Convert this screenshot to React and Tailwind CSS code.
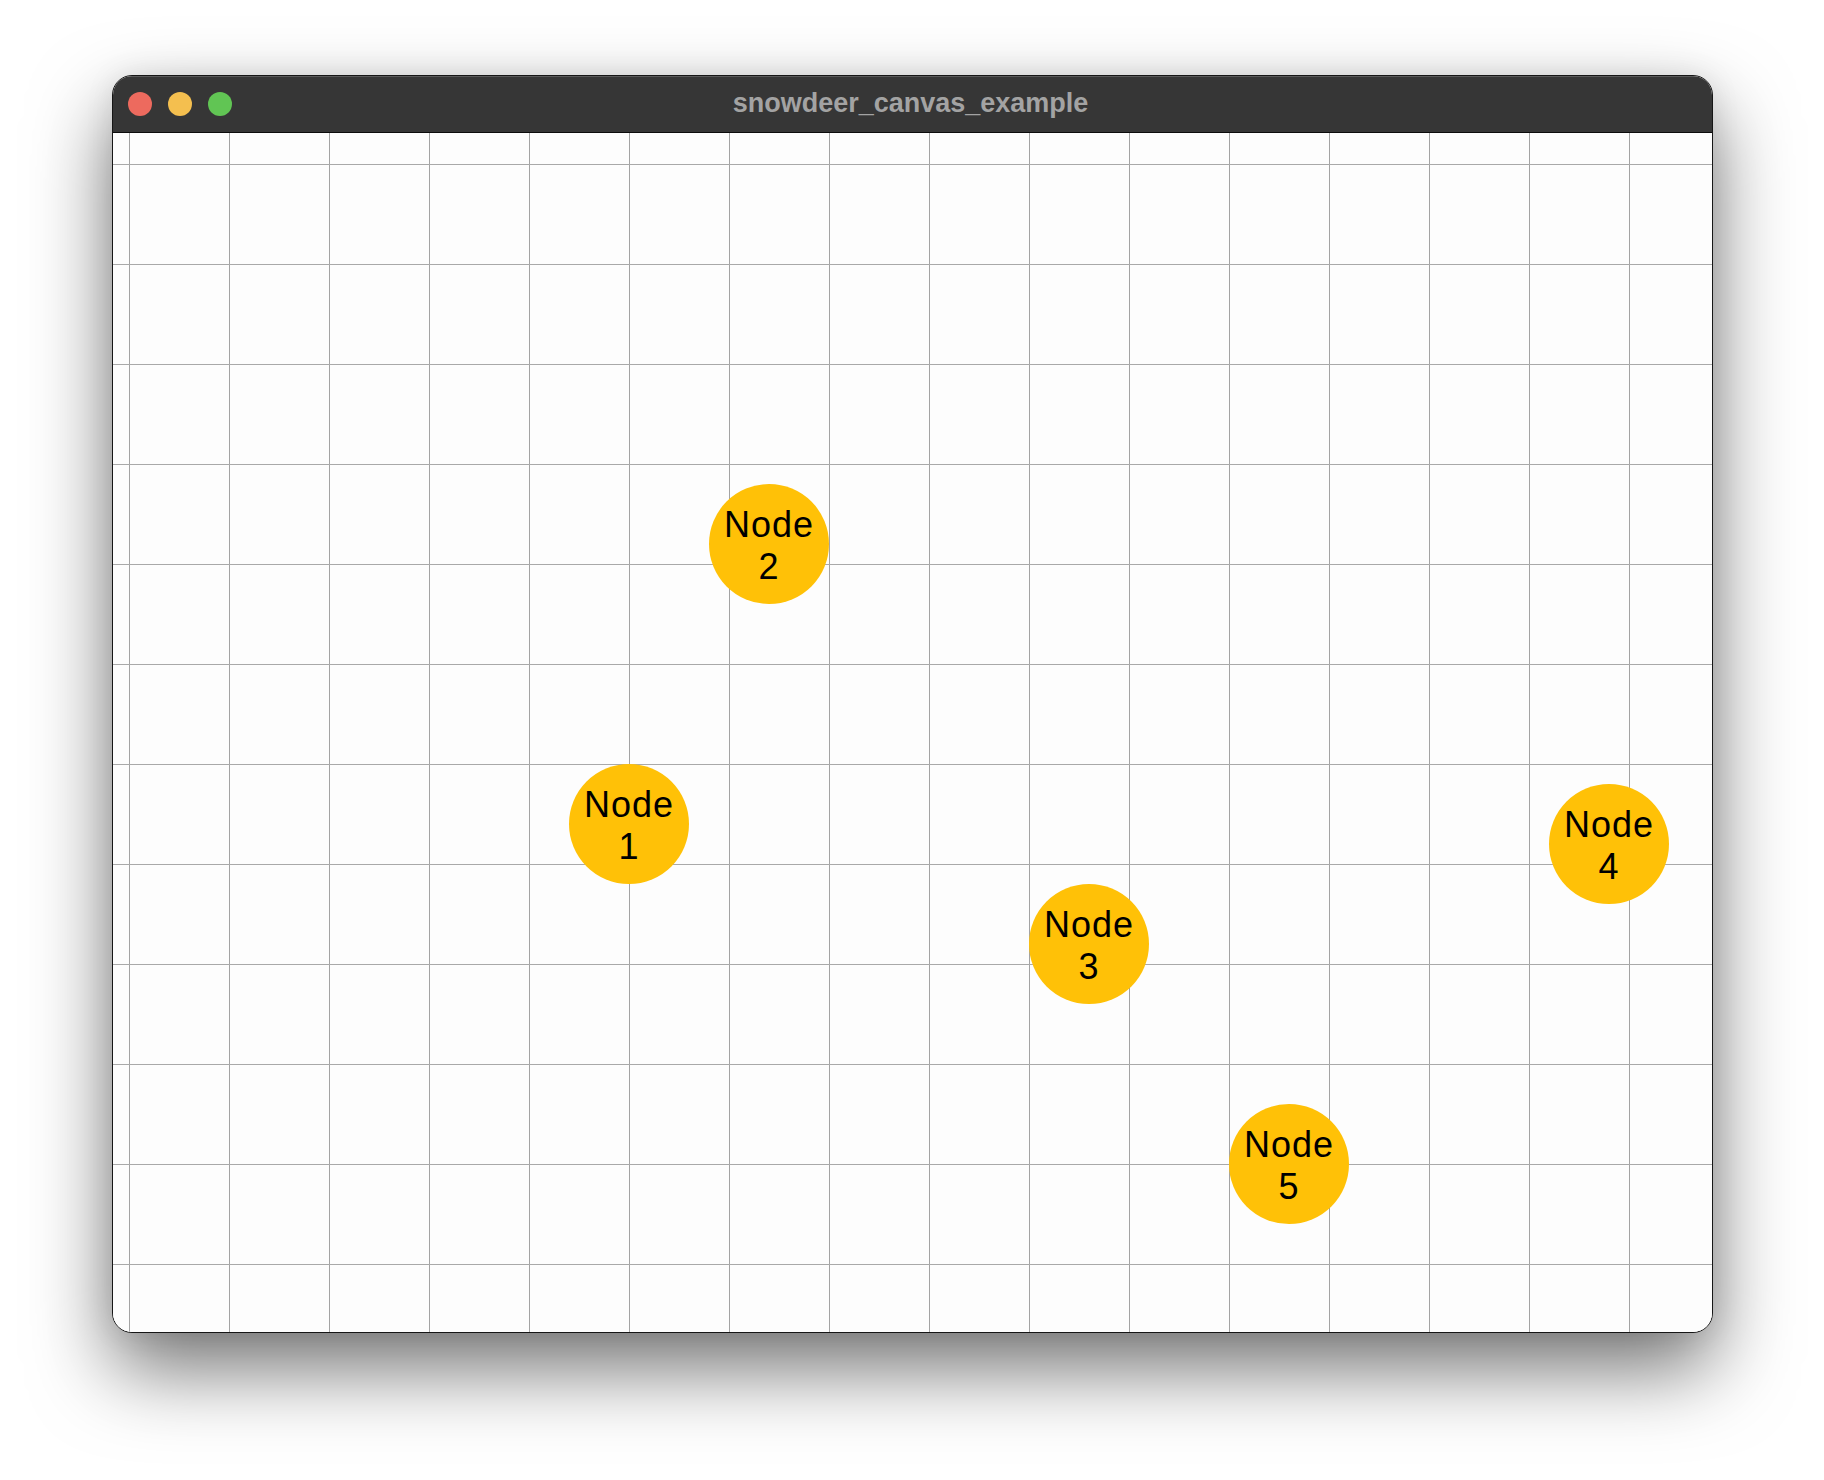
import React from "react";

const nodes = [
  { id: 1, x: 516, y: 691 },
  { id: 2, x: 656, y: 411 },
  { id: 3, x: 976, y: 811 },
  { id: 4, x: 1496, y: 711 },
  { id: 5, x: 1176, y: 1031 },
];

function Grid() {
  const v = [];
  for (let i = 0; i < 16; i++) v.push(16 + i * 100);
  const h = [];
  for (let j = 0; j < 12; j++) h.push(31 + j * 100);
  return (
    <svg className="absolute inset-0" width="1600" height="1200" shapeRendering="crispEdges">
      {v.map((x) => (
        <line key={"v" + x} x1={x + 0.5} y1={0} x2={x + 0.5} y2={1200} stroke="#a3a3a3" strokeWidth="1" />
      ))}
      {h.map((y) => (
        <line key={"h" + y} x1={0} y1={y + 0.5} x2={1600} y2={y + 0.5} stroke="#a9a9a9" strokeWidth="1" />
      ))}
    </svg>
  );
}

export default function App() {
  return (
    <div className="w-[1824px] h-[1480px] bg-white pt-[75px] pl-[112px]">
      <div className="w-[1601px] h-[1258px] rounded-[20px] border border-[#161616] overflow-hidden bg-[#fdfdfd] shadow-[0_36px_80px_rgba(0,0,0,0.55),0_0_30px_rgba(0,0,0,0.08)] flex flex-col">
        <div className="h-[57px] shrink-0 bg-[#363636] border-b border-[#0c0c0c] shadow-[inset_0_1px_0_rgba(255,255,255,0.18)] relative flex items-center justify-center">
          <div className="absolute left-[15px] top-[16px] flex gap-[16px]">
            <div className="w-[24px] h-[24px] rounded-full bg-[#ed6a5e]" />
            <div className="w-[24px] h-[24px] rounded-full bg-[#f4bf4f]" />
            <div className="w-[24px] h-[24px] rounded-full bg-[#61c554]" />
          </div>
          <span className="text-[27px] font-bold text-[#a3a3a3] font-['Liberation_Sans',Arial,sans-serif] tracking-[0px] -mt-[2px] -ml-[4px]">
            snowdeer_canvas_example
          </span>
        </div>
        <div className="relative flex-1 bg-[#fdfdfd]">
          <Grid />
          {nodes.map((n) => (
            <div
              key={n.id}
              className="absolute w-[120px] h-[120px] rounded-full bg-[#ffc107] flex flex-col items-center justify-center text-black text-[36px] leading-[42px] tracking-[1px] font-['Liberation_Sans',Arial,sans-serif]"
              style={{ left: n.x - 60, top: n.y - 60 }}
            >
              <span className="mt-[3px]">Node</span>
              <span>{n.id}</span>
            </div>
          ))}
        </div>
      </div>
    </div>
  );
}
